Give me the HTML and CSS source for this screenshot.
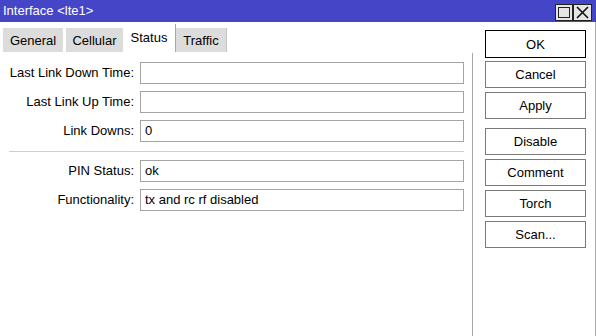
FILE: index.html
```html
<!DOCTYPE html>
<html>
<head>
<meta charset="utf-8">
<link rel="stylesheet" href="styles.css">
</head>
<body>
<div class="window">
  <div class="titlebar">
    <span class="title">Interface &lt;lte1&gt;</span>
    <div class="tb-buttons">
      <span class="tb-btn"><svg width="18" height="17" viewBox="0 0 18 17"><rect x="0.5" y="0.5" width="17" height="16" fill="#e6e6e6" stroke="#222"/><rect x="3.5" y="3.5" width="11" height="10" fill="none" stroke="#222"/></svg></span>
      <span class="tb-btn"><svg width="19" height="17" viewBox="0 0 19 17"><rect x="0.5" y="0.5" width="18" height="16" fill="#e6e6e6" stroke="#222"/><path d="M4 3 L15 14 M15 3 L4 14" stroke="#111" stroke-width="1.6"/></svg></span>
    </div>
  </div>
  <div class="main">
    <div class="left">
      <div class="tabs">
        <div class="tab tab-general">General</div>
        <div class="tab tab-cellular">Cellular</div>
        <div class="tab tab-status active">Status</div>
        <div class="tab tab-traffic">Traffic</div>
      </div>
      <div class="panel">
        <div class="form">
          <label class="lbl">Last Link Down Time:</label><div class="field"></div>
          <label class="lbl">Last Link Up Time:</label><div class="field"></div>
          <label class="lbl">Link Downs:</label><div class="field">0</div>
        </div>
        <div class="sep"></div>
        <div class="form">
          <label class="lbl">PIN Status:</label><div class="field">ok</div>
          <label class="lbl">Functionality:</label><div class="field">tx and rc rf disabled</div>
        </div>
      </div>
    </div>
    <div class="right">
      <div class="btn btn-ok">OK</div>
      <div class="btn">Cancel</div>
      <div class="btn btn-group-end">Apply</div>
      <div class="btn">Disable</div>
      <div class="btn">Comment</div>
      <div class="btn">Torch</div>
      <div class="btn">Scan...</div>
    </div>
  </div>
</div>
</body>
</html>
```

FILE: styles.css
```css
* { box-sizing: border-box; }
html, body { margin: 0; padding: 0; background: #fff; }
body {
  font-family: "Liberation Sans", Arial, sans-serif;
  font-size: 13px;
  color: #000;
}
.window {
  width: 596px;
  height: 336px;
  display: flex;
  flex-direction: column;
  overflow: hidden;
}
.titlebar {
  height: 22px;
  background: #4545c7;
  color: #fff;
  display: flex;
  align-items: center;
  justify-content: space-between;
  padding-left: 3px;
  padding-right: 4px;
  flex: none;
}
.title { font-size: 13px; line-height: 22px; }
.tb-buttons { display: flex; gap: 0; height: 17px; margin-top: 2px; }
.tb-btn { display: block; height: 17px; }
.tb-btn svg { display: block; }
.main {
  flex: 1;
  display: flex;
  min-height: 0;
}
.left {
  width: 473px;
  display: flex;
  flex-direction: column;
}
.tabs {
  height: 28px;
  margin-top: 2px;
  display: flex;
  align-items: flex-end;
  padding-left: 3px;
  flex: none;
}
.tab {
  height: 24px;
  background: #dcdcdc;
  display: flex;
  align-items: center;
  justify-content: center;
  padding-top: 1px;
}
.tab-general { width: 60px; }
.tab-cellular { width: 57px; margin-left: 3px; }
.tab-status {
  width: 53px;
  height: 28px;
  background: #fff;
  border-right: 1px solid #a8a8a8;
  padding-top: 0;
  padding-bottom: 2px;
}
.tab-traffic {
  width: 51px;
  border-right: 1px solid #c4c4c4;
}
.panel {
  flex: 1;
  border-right: 1px solid #a8a8a8;
  margin-top: 1px;
  padding: 9px 8px 0 9px;
}
.form {
  display: grid;
  grid-template-columns: 125px 324px;
  column-gap: 6px;
  row-gap: 7px;
}
.lbl {
  text-align: right;
  line-height: 22px;
  height: 22px;
  white-space: nowrap;
}
.field {
  height: 22px;
  border: 1px solid #a4a4a4;
  line-height: 20px;
  padding-left: 4px;
  white-space: nowrap;
}
.sep {
  height: 1px;
  background: #d0d0d0;
  margin: 9px 0 8px 0;
  width: 455px;
}
.right {
  flex: 1;
  border-right: 1px solid #a8a8a8;
  padding: 8px 0 0 12px;
  display: flex;
  flex-direction: column;
}
.btn {
  width: 101px;
  height: 27px;
  border: 1px solid #7a7a7a;
  display: flex;
  align-items: center;
  justify-content: center;
  margin-bottom: 4px;
  background: #fff;
}
.btn-ok { border-color: #000; height: 28px; margin-bottom: 3px; }
.btn-group-end { margin-bottom: 9px; }
```
